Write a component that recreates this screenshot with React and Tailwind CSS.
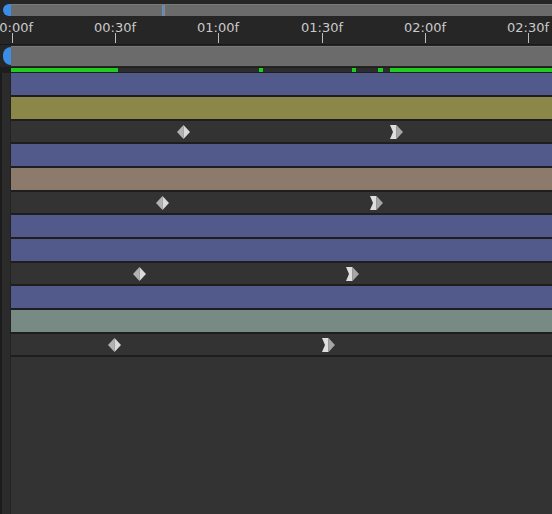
import React from 'react';

// 30-frame ruler marks, ~103px apart starting at the track origin
const marks = [
  { label: '00:00f', x: 12 },
  { label: '00:30f', x: 115 },
  { label: '01:00f', x: 218 },
  { label: '01:30f', x: 322 },
  { label: '02:00f', x: 425 },
  { label: '02:30f', x: 528 },
];

// cached-frame segments in the green strip (x, width)
const cached = [
  [11, 107],
  [259, 4],
  [352, 4],
  [378, 5],
  [390, 162],
];

const layers = [
  { a: 'bg-[#525a8c]', b: 'bg-[#8a8749]', keyIn: 184, keyOut: 396 },
  { a: 'bg-[#525a8c]', b: 'bg-[#8c7b6c]', keyIn: 163, keyOut: 376 },
  { a: 'bg-[#525a8c]', b: 'bg-[#525a8c]', keyIn: 140, keyOut: 352 },
  { a: 'bg-[#525a8c]', b: 'bg-[#778a83]', keyIn: 115, keyOut: 328 },
];

const Gutter = () => (
  <div className="w-[11px] shrink-0 flex">
    <div className="w-[2px] bg-[#1b1b1b]" />
    <div className="w-[8px] bg-[#2b2b2b]" />
    <div className="w-[1px] bg-[#222]" />
  </div>
);

const BarRow = ({ color }) => (
  <div className="flex h-[24px]">
    <Gutter />
    <div className="flex-1 flex flex-col">
      <div className={`h-[22px] ${color}`} />
      <div className="h-[2px] bg-[#1e1e1e]" />
    </div>
  </div>
);

const Diamond = ({ x }) => (
  <svg className="absolute top-[4px]" style={{ left: x - 11 - 7 }} width="13" height="14" viewBox="0 0 13 14">
    <polygon points="6.5,0 6.5,14 0,7" fill="#b2b2b2" />
    <polygon points="6.5,0 13,7 6.5,14" fill="#dadada" />
  </svg>
);

const OutKey = ({ x }) => (
  <svg className="absolute top-[4px]" style={{ left: x - 11 - 6 }} width="13" height="14" viewBox="0 0 13 14">
    <polygon points="0,0 6.5,0 6.5,14 0,14 3,7" fill="#dedede" />
    <polygon points="6.5,0 13,7 6.5,14" fill="#a6a6a6" />
  </svg>
);

const KeyRow = ({ keyIn, keyOut }) => (
  <div className="flex h-[23px]">
    <Gutter />
    <div className="flex-1 flex flex-col">
      <div className="h-[21px] bg-[#333333] relative">
        <Diamond x={keyIn} />
        <OutKey x={keyOut} />
      </div>
      <div className="h-[2px] bg-[#1e1e1e]" />
    </div>
  </div>
);

export default function App() {
  return (
    <div className="w-[552px] h-[514px] bg-[#333333] overflow-hidden flex flex-col font-['DejaVu_Sans',sans-serif]">
      {/* Top scroll bar */}
      <div className="h-[17px] bg-[#252525] flex pt-[4px] pb-[1px]">
        <div className="ml-[3px] w-[8px] rounded-l-full bg-[#3a8ee6]" />
        <div className="flex-1 bg-[#6b6b6b] border-t border-[#7a7a7a] relative">
          <div className="absolute top-0 bottom-0 left-[151px] w-[1px] bg-[#8a8a8a]" />
          <div className="absolute top-0 bottom-0 left-[152px] w-[1px] bg-[#3a8ee6]" />
          <div className="absolute top-0 bottom-0 left-[153px] w-[1px] bg-[#8a8a8a]" />
        </div>
      </div>

      {/* Time ruler */}
      <div className="h-[28px] bg-[#262626] border-b border-[#181818] relative">
        {marks.map((m) => (
          <div key={m.label}>
            <span
              className="absolute top-[4px] -translate-x-1/2 text-[13px] leading-[14px] text-[#cacaca] whitespace-nowrap"
              style={{ left: m.x }}
            >
              {m.label}
            </span>
            <div className="absolute top-[16px] h-[10px] w-[1px] bg-[#bdbdbd]" style={{ left: m.x }} />
          </div>
        ))}
      </div>

      {/* Work area bar */}
      <div className="h-[22px] bg-[#262626] flex py-[1px]">
        <div className="ml-[3px] w-[8px] rounded-l-full bg-[#3a8ee6] my-[1px]" />
        <div className="flex-1 bg-[#6b6b6b] border-t border-[#777]" />
      </div>

      {/* Cached frames strip */}
      <div className="h-[6px] bg-[#1e1e1e] relative">
        <div className="absolute left-[11px] right-0 top-[1px] h-[4px] bg-[#2d2d2d]" />
        {cached.map(([x, w]) => (
          <div key={x} className="absolute top-[1px] h-[4px] bg-[#1fcc1f]" style={{ left: x, width: w }} />
        ))}
      </div>

      {/* Layer tracks */}
      <div className="flex flex-col">
        {layers.map((l, i) => (
          <React.Fragment key={i}>
            <BarRow color={l.a} />
            <BarRow color={l.b} />
            <KeyRow keyIn={l.keyIn} keyOut={l.keyOut} />
          </React.Fragment>
        ))}
      </div>

      {/* Empty space below tracks */}
      <div className="flex-1 flex">
        <Gutter />
        <div className="flex-1 bg-[#333333]" />
      </div>
    </div>
  );
}
